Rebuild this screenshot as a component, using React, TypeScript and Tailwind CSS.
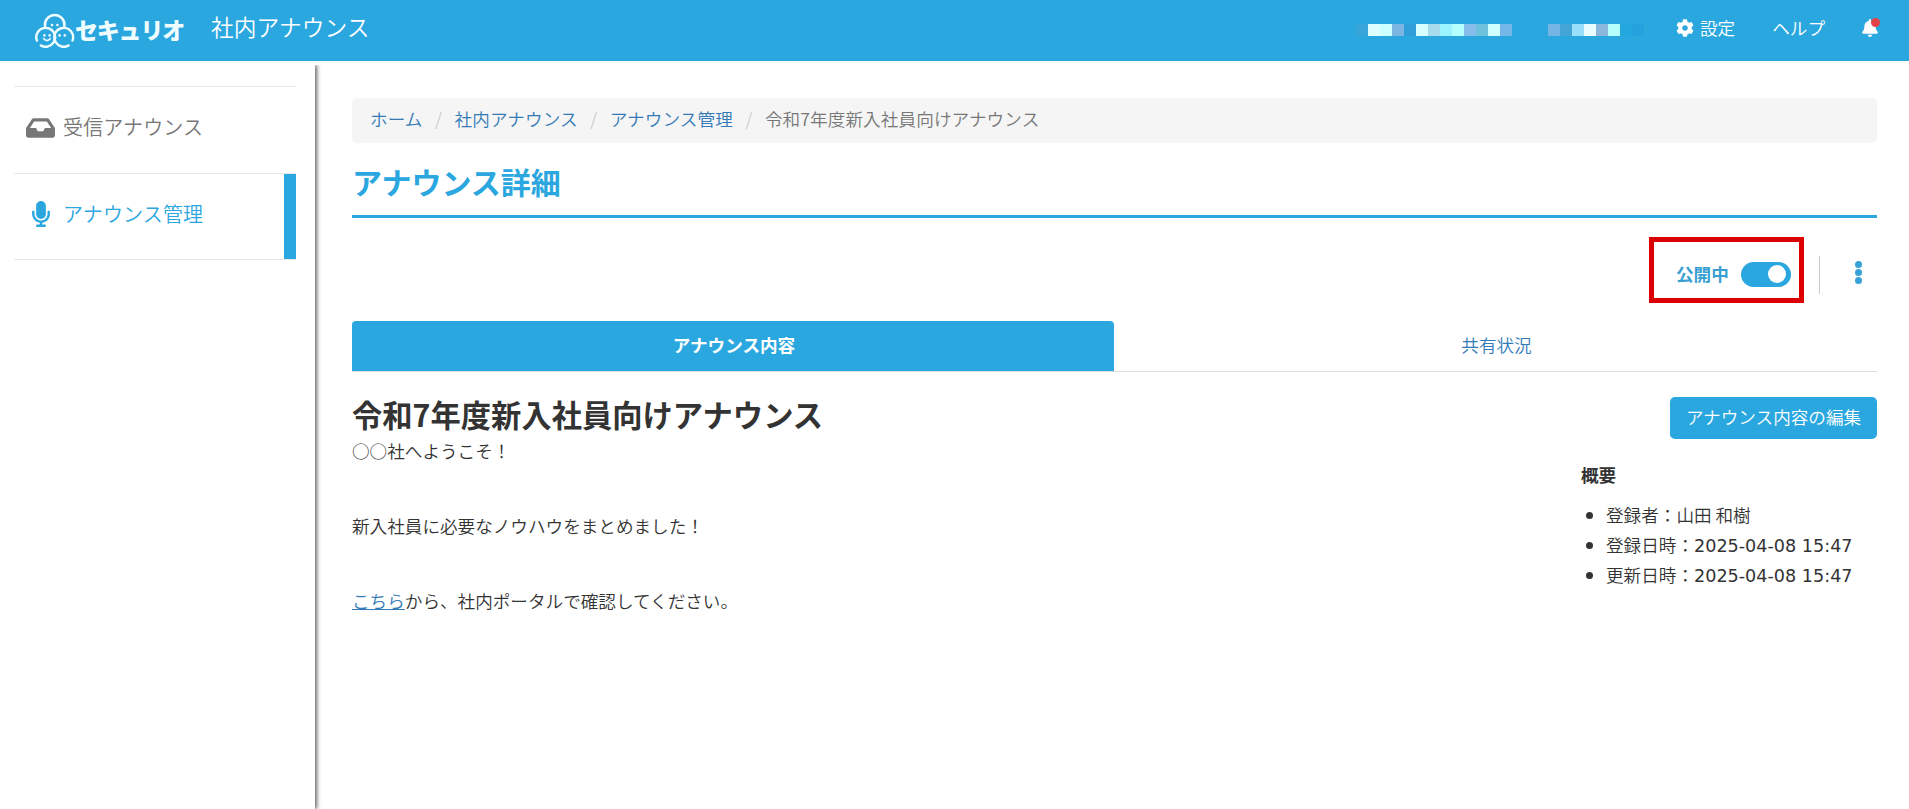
import clsx from "clsx";
import type { ReactNode } from "react";
import { FaBell, FaCog, FaInbox, FaMicrophone } from "react-icons/fa";

const maskedName = [
  "bg-[#37a5da]",
  "bg-[#dcfeff]",
  "bg-[#ccffff]",
  "bg-[#7bb6e2]",
  "bg-[#309fd9]",
  "bg-[#d8ffff]",
  "bg-[#a8dcec]",
  "bg-[#9bf4ff]",
  "bg-[#b6ffff]",
  "bg-[#86bdeb]",
  "bg-[#6fc2dc]",
  "bg-[#d0ffff]",
  "bg-[#75b7e9]",
  "bg-transparent",
  "bg-transparent",
  "bg-transparent",
  "bg-[#75b5e3]",
  "bg-[#44a4d6]",
  "bg-[#98e0f9]",
  "bg-[#e8fdff]",
  "bg-[#8bb7da]",
  "bg-[#b5fffc]",
  "bg-[#22a8dc]",
  "bg-[#25a2dd]",
];

const crumbs = ["ホーム", "社内アナウンス", "アナウンス管理"];

const details = [
  { label: "登録者", value: "山田 和樹" },
  { label: "登録日時", value: "2025-04-08 15:47" },
  { label: "更新日時", value: "2025-04-08 15:47" },
];

const Logo = () => (
  <div className="flex items-center">
    <svg
      viewBox="0 0 40 38"
      className="h-[38px] w-10"
      fill="none"
      stroke="#effdff"
      strokeWidth="2.4"
      strokeLinecap="round"
    >
      <path d="M10 14.2A9.8 9.8 0 1 1 29.4 14.2" />
      <path d="M1.9 28.6A9.4 9.4 0 1 1 18.6 30.4A9.4 9.4 0 0 1 5.8 33.4" />
      <path d="M37.5 28.6A9.4 9.4 0 1 0 20.8 30.4A9.4 9.4 0 0 0 33.6 33.4" />
      <path d="M8.6 26.6Q12 30.6 15.4 26.6" strokeWidth="1.6" />
      <g fill="#effdff" stroke="none">
        <circle cx="17" cy="13" r="1.3" />
        <circle cx="22.4" cy="13" r="1.3" />
        <circle cx="9.4" cy="23.4" r="1.3" />
        <circle cx="14.6" cy="23.4" r="1.3" />
        <circle cx="24.6" cy="23.4" r="1.3" />
        <circle cx="29.8" cy="23.4" r="1.3" />
      </g>
    </svg>
    <span className="pb-[5px] text-[23px] leading-8 font-black tracking-[-1.2px] text-[#effdff]">
      セキュリオ
    </span>
  </div>
);

const Header = () => (
  <header className="flex h-[61px] items-start bg-[#2ba7e0] text-white">
    <div className="mt-3 ml-[35px] w-[176px]">
      <Logo />
    </div>
    <h1 className="mt-[11px] text-[22.7px] leading-8 tracking-[0.1px]">
      社内アナウンス
    </h1>
    <div className="mt-6 ml-auto flex">
      {maskedName.map((color, i) => (
        <span key={i} className={clsx("h-3 w-3", color)} />
      ))}
    </div>
    <a className="mt-4 ml-8 flex items-center leading-6">
      <FaCog className="mr-1.5 text-[18px]" />
      設定
    </a>
    <a className="mt-4 ml-[37px] leading-6">ヘルプ</a>
    <div className="relative mt-[19px] mr-[31px] ml-[37px]">
      <FaBell className="h-[18px] w-4" />
      <span className="absolute -top-px -right-0.5 h-[9px] w-[9px] rounded-full bg-[#e34348]" />
    </div>
  </header>
);

const SidebarItem = ({
  icon,
  label,
  active,
}: {
  icon: ReactNode;
  label: string;
  active?: boolean;
}) => (
  <li
    className={clsx(
      "flex h-[86.5px] items-center border-b border-[#e7e7e7] text-[20px]",
      active ? "text-[#2ba7e0]" : "text-[#777]"
    )}
  >
    <span className="ml-3 flex w-[29px] justify-center pb-1">{icon}</span>
    <span className="ml-2 pb-[5px] leading-7 tracking-[0.15px]">{label}</span>
    {active && <span className="ml-auto h-full w-3 bg-[#2ba7e0]" />}
  </li>
);

const Sidebar = () => (
  <aside className="mt-1 w-[315px] shrink-0 shadow-[2px_0_4px_rgba(0,0,0,0.6)] [clip-path:inset(0_-8px_0_0)]">
    <ul className="mt-[21px] ml-3.5 w-[282px] border-t border-[#e7e7e7]">
      <SidebarItem
        icon={<FaInbox className="h-[26px] w-[29px]" />}
        label="受信アナウンス"
      />
      <SidebarItem
        icon={<FaMicrophone className="h-[26px] w-[18px]" />}
        label="アナウンス管理"
        active
      />
    </ul>
  </aside>
);

const Breadcrumb = () => (
  <nav className="flex h-[45px] items-center rounded-[5px] bg-[#f5f5f5] pb-[3px] pl-[18px] tracking-[0.1px]">
    {crumbs.map((crumb) => (
      <span key={crumb} className="text-[#337ab7]">
        {crumb}
        <span className="px-[12.5px] text-[#ccc]">/</span>
      </span>
    ))}
    <span className="text-[#777]">令和7年度新入社員向けアナウンス</span>
  </nav>
);

const Toolbar = () => (
  <div className="mt-[19px] flex h-[66px] items-center justify-end">
    <div className="flex h-[66px] w-[155px] items-center border-5 border-[#dc0000] pt-2 pl-[22px]">
      <span className="mr-3 font-bold text-[#3a9fd2]">公開中</span>
      <button className="flex h-[25px] w-[50px] items-center justify-end rounded-full bg-[#2ba7e0] pr-[5px]">
        <span className="h-[18px] w-[18px] rounded-full bg-white" />
      </button>
    </div>
    <span className="mt-2.5 ml-[15px] h-[38px] w-px bg-[#ccc]" />
    <button className="mt-1 mr-[15px] ml-[35px] flex flex-col gap-px">
      <span className="h-[7px] w-[7px] rounded-full bg-[#36a2d6]" />
      <span className="h-[7px] w-[7px] rounded-full bg-[#36a2d6]" />
      <span className="h-[7px] w-[7px] rounded-full bg-[#36a2d6]" />
    </button>
  </div>
);

const Tabs = () => (
  <div className="mt-[18px] flex h-[51px] border-b border-[#ddd] text-center leading-[46px]">
    <button className="w-[762px] rounded-t-[4px] bg-[#2ba7e0] pb-[3px] pl-0.5 font-bold text-white">
      アナウンス内容
    </button>
    <button className="flex-1 pb-[3px] pl-0.5 text-[#337ab7]">共有状況</button>
  </div>
);

const Announcement = () => (
  <article className="flex-1">
    <h3 className="mt-[22px] text-[30.3px] leading-10 font-bold">
      令和7年度新入社員向けアナウンス
    </h3>
    <div className="mt-1 space-y-[50px] leading-[25px]">
      <p>○○社へようこそ！</p>
      <p>新入社員に必要なノウハウをまとめました！</p>
      <p>
        <a className="text-[#337ab7] underline">こちら</a>
        から、社内ポータルで確認してください。
      </p>
    </div>
  </article>
);

const Summary = () => (
  <div className="mt-[25px] flex w-[296px] flex-col">
    <button className="h-[42px] w-[207px] self-end rounded-[5px] bg-[#2ba7e0] pb-0.5 text-white">
      アナウンス内容の編集
    </button>
    <h4 className="mt-[23px] leading-[25px] font-bold">概要</h4>
    <ul className="mt-[13px] list-disc pl-[25px] leading-[30px]">
      {details.map(({ label, value }) => (
        <li key={label} className="h-[30px]">
          {label}：
          {/^\d/.test(value) ? (
            <span className="font-['DejaVu_Sans',sans-serif] leading-none font-normal">
              {value}
            </span>
          ) : (
            value
          )}
        </li>
      ))}
    </ul>
  </div>
);

const App = () => {
  return (
    <div className="flex h-screen flex-col overflow-hidden bg-white font-['Noto_Sans_CJK_JP',sans-serif] text-[17.6px] font-[350] text-[#333]">
      <Header />
      <div className="flex flex-1">
        <Sidebar />
        <main className="mt-[37px] mr-8 ml-[37px] flex-1">
          <Breadcrumb />
          <h2 className="mt-[18px] border-b-3 border-[#2ba7e0] pb-3.5 text-[30px] leading-10 font-bold text-[#2ba7e0]">
            アナウンス詳細
          </h2>
          <Toolbar />
          <Tabs />
          <div className="flex">
            <Announcement />
            <Summary />
          </div>
        </main>
      </div>
    </div>
  );
};

export default App;
